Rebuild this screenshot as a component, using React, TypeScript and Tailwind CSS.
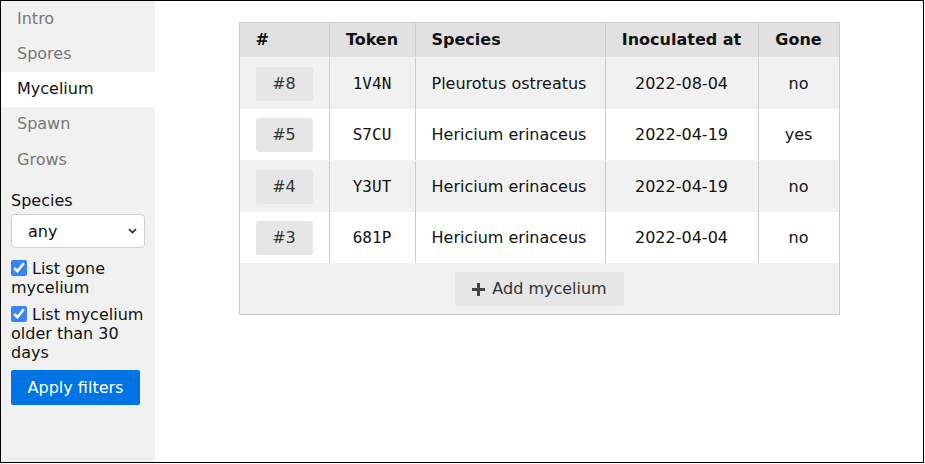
import React from "react";

const font = { fontFamily: '"DejaVu Sans", Verdana, sans-serif' };

const rows = [
  { n: 8, token: "1V4N", species: "Pleurotus ostreatus", date: "2022-08-04", gone: "no" },
  { n: 5, token: "S7CU", species: "Hericium erinaceus", date: "2022-04-19", gone: "yes" },
  { n: 4, token: "Y3UT", species: "Hericium erinaceus", date: "2022-04-19", gone: "no" },
  { n: 3, token: "681P", species: "Hericium erinaceus", date: "2022-04-04", gone: "no" },
];

const nav = ["Intro", "Spores", "Mycelium", "Spawn", "Grows"];

export default function App() {
  return (
    <div
      className="w-[924px] h-[463px] border border-black flex bg-white text-[16px] text-[#111]"
      style={font}
    >
      <aside className="w-[154px] shrink-0 bg-[#f1f1f1] flex flex-col">
        <nav className="flex flex-col">
          {nav.map((n) => (
            <div
              key={n}
              className={
                n === "Mycelium"
                  ? "h-[35.25px] flex items-center pl-4 bg-white text-[#111]"
                  : "h-[35.25px] flex items-center pl-4 text-[#777]"
              }
            >
              {n}
            </div>
          ))}
        </nav>
        <div className="px-[10px] pt-[14px] flex flex-col">
          <div className="leading-[19px] text-[#111]">Species</div>
          <div className="relative mt-[4px] h-[34px] w-[134px]">
            <select className="appearance-none w-full h-full bg-white border border-[#d0d0d0] rounded-[4px] pl-4 text-[#111] leading-[19px]">
              <option>any</option>
            </select>
            <svg
              className="absolute right-[8px] top-[14px] pointer-events-none"
              width="9"
              height="6"
              viewBox="0 0 9 6"
            >
              <path d="M1 1l3.5 3.5L8 1" fill="none" stroke="#222" strokeWidth="1.6" />
            </svg>
          </div>
          <label className="mt-[11px] leading-[19px] text-[#111] block">
            <input
              type="checkbox"
              defaultChecked
              className="w-4 h-4 align-[-2px] mr-[5px] accent-[#3b82f6]"
            />
            List gone mycelium
          </label>
          <label className="mt-[8px] leading-[19px] text-[#111] block">
            <input
              type="checkbox"
              defaultChecked
              className="w-4 h-4 align-[-2px] mr-[5px] accent-[#3b82f6]"
            />
            List mycelium older than 30 days
          </label>
          <div className="mt-[8px]">
            <button className="h-[35px] w-[129px] bg-[#0074e4] text-white rounded-[2px]">
              Apply filters
            </button>
          </div>
        </div>
      </aside>
      <main className="flex-1 flex justify-center pt-[21px]">
        <div className="w-[601px] h-fit border border-[#cccccc]">
          <div className="grid grid-cols-[89px_86px_190px_153px_81px] h-[34px] bg-[#e1e1e1] font-bold">
            <div className="flex items-center pl-4">#</div>
            <div className="flex items-center justify-center border-l border-[#cccccc]">Token</div>
            <div className="flex items-center pl-4 border-l border-[#cccccc]">Species</div>
            <div className="flex items-center justify-center border-l border-[#cccccc]">Inoculated at</div>
            <div className="flex items-center justify-center border-l border-[#cccccc]">Gone</div>
          </div>
          {rows.map((r, i) => (
            <div
              key={r.n}
              className={
                "grid grid-cols-[89px_86px_190px_153px_81px] " +
                (i % 2 === 0 ? "bg-[#f1f1f1] h-[52px] pt-px" : "bg-white h-[51px]")
              }
            >
              <div className="flex items-center pl-4">
                <span className="w-[57px] h-[34px] flex items-center justify-center bg-[#e6e6e6] rounded-[3px] text-[#333]">
                  #{r.n}
                </span>
              </div>
              <div
                className="flex items-center justify-center border-l border-[#cccccc]"
                style={{ fontFamily: '"DejaVu Sans Mono", monospace' }}
              >
                {r.token}
              </div>
              <div className="flex items-center pl-4 border-l border-[#cccccc]">{r.species}</div>
              <div className="flex items-center justify-center border-l border-[#cccccc]">{r.date}</div>
              <div className="flex items-center justify-center border-l border-[#cccccc]">{r.gone}</div>
            </div>
          ))}
          <div className="h-[51px] bg-[#f1f1f1] flex items-center justify-center pt-px">
            <button className="h-[34px] w-[169px] flex items-center justify-center gap-[6px] bg-[#e6e6e6] rounded-[3px] text-[#333]">
              <svg width="15" height="15" viewBox="0 0 15 15">
                <path d="M7.5 1v13M1 7.5h13" stroke="#444" strokeWidth="3" />
              </svg>
              Add mycelium
            </button>
          </div>
        </div>
      </main>
    </div>
  );
}
